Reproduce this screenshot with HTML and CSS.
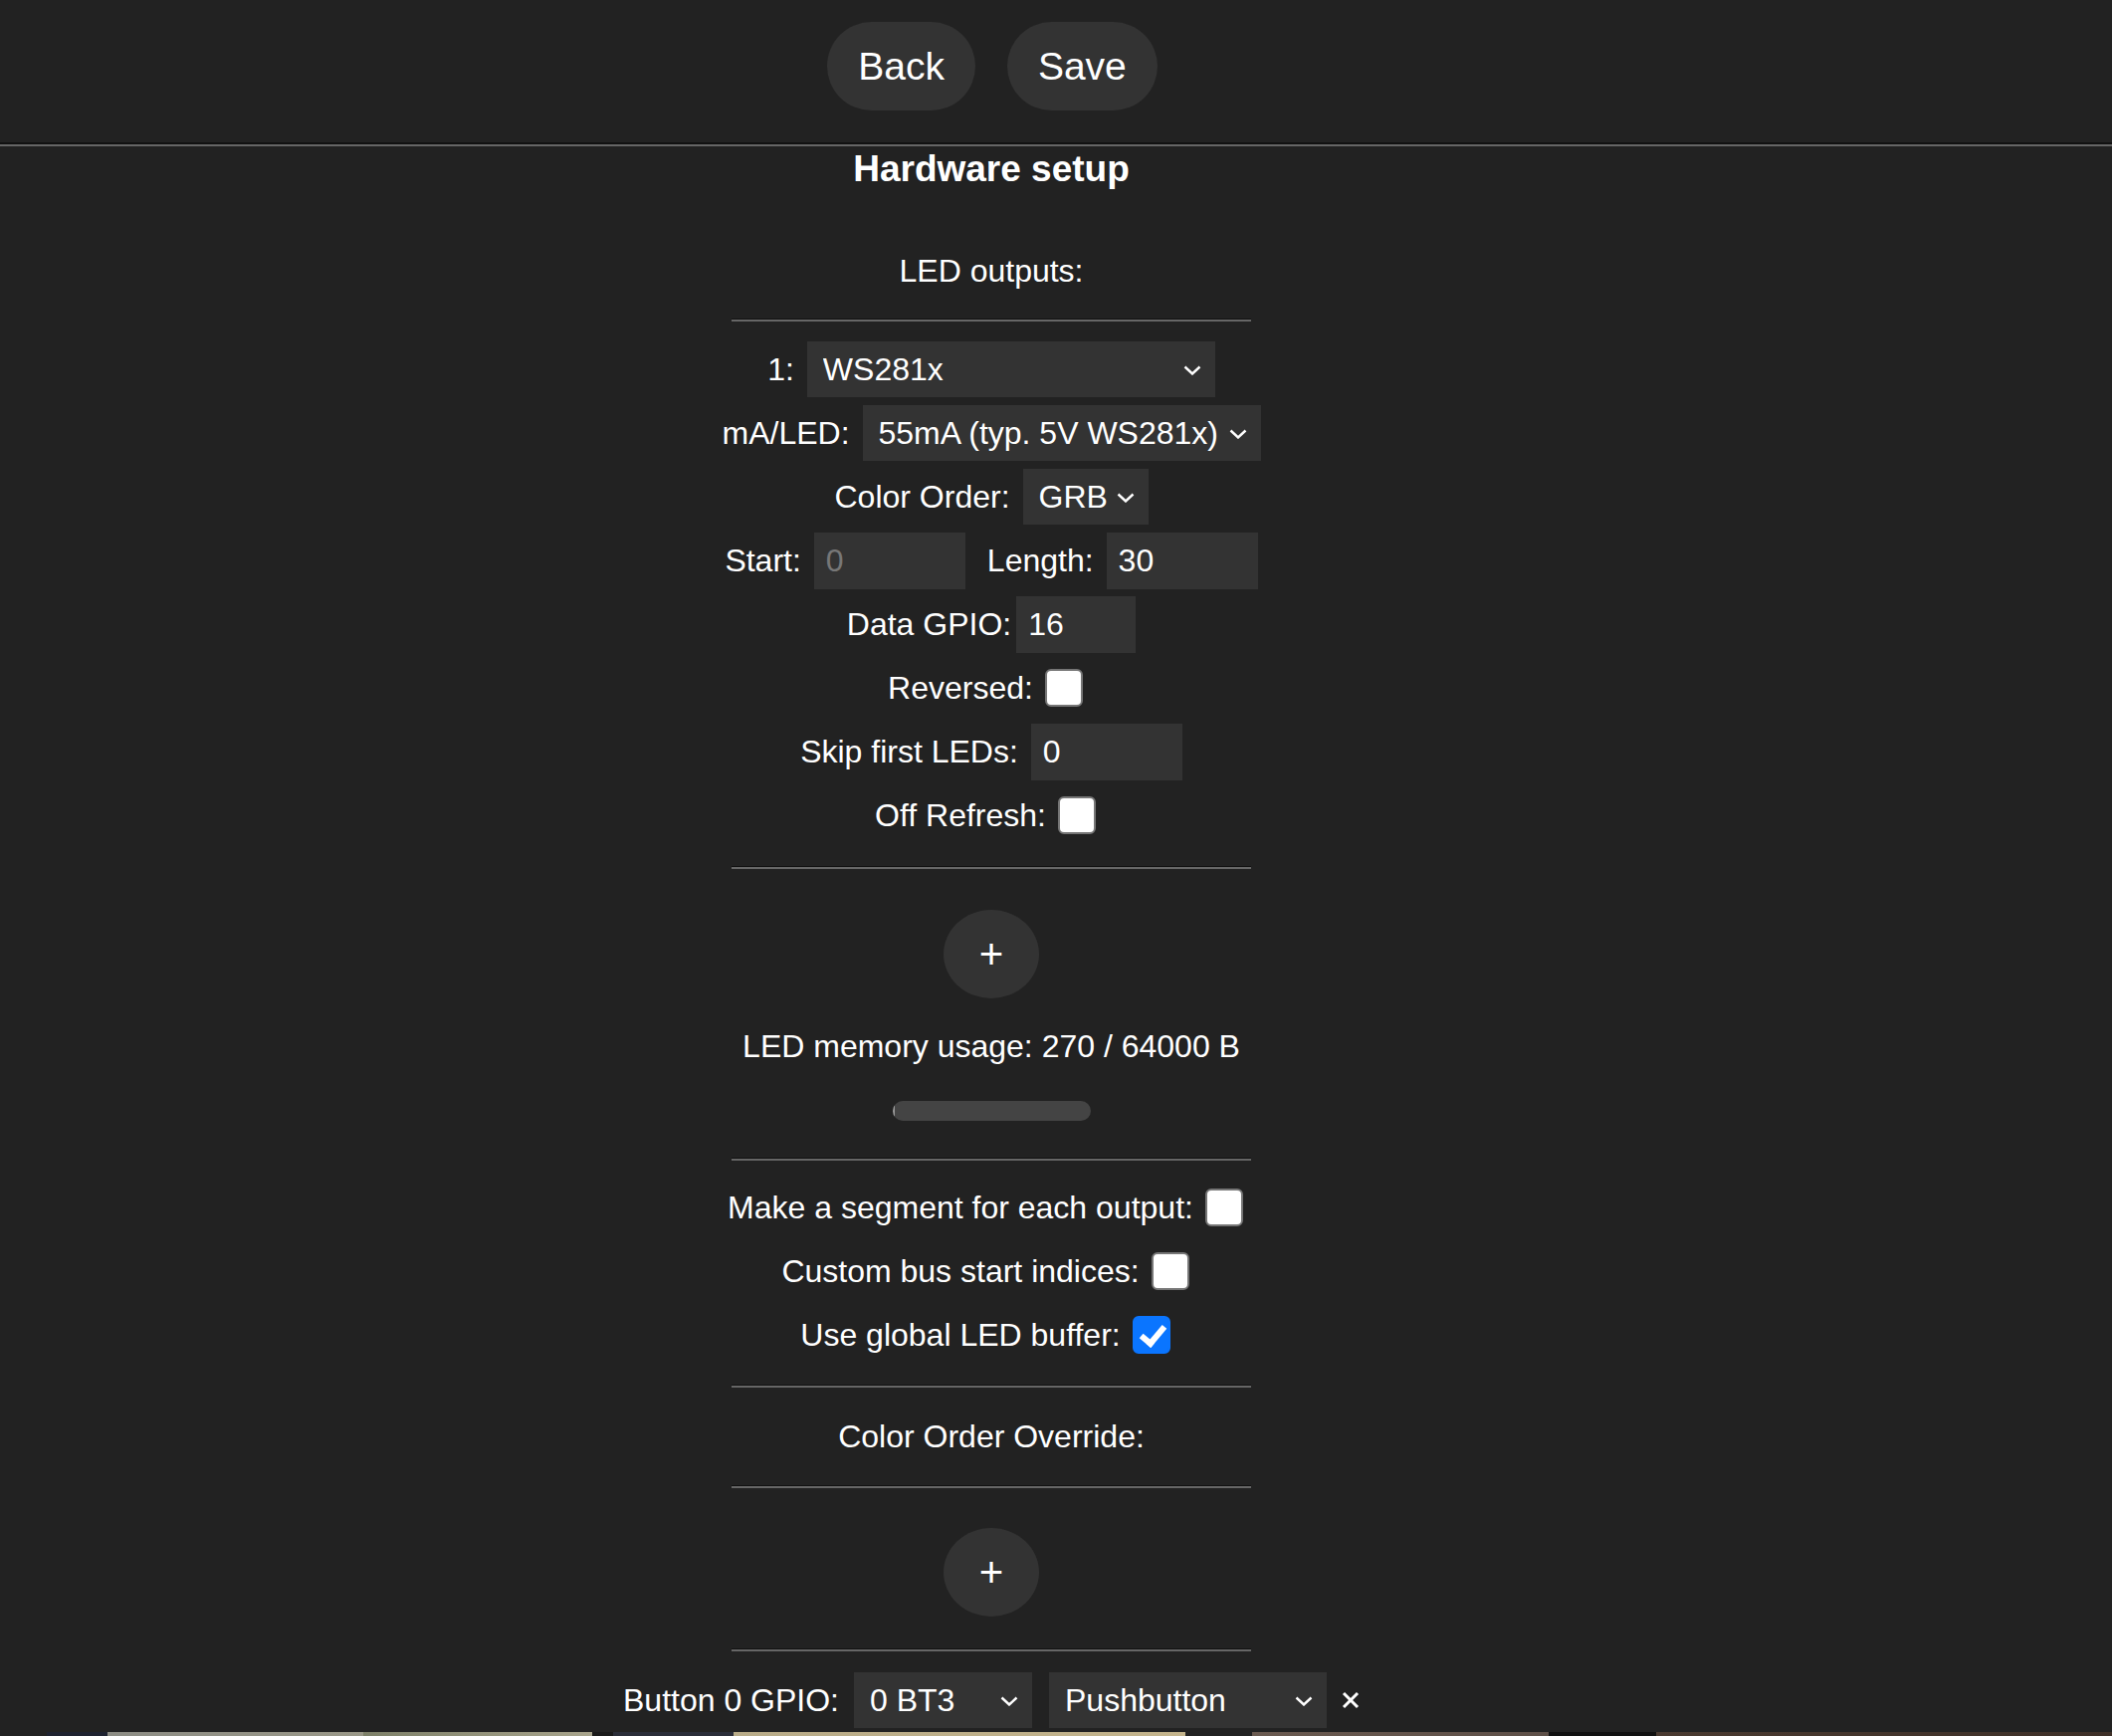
FILE: index.html
```html
<!DOCTYPE html>
<html lang="en">
<head>
  <meta charset="UTF-8">
  <title>LED Settings</title>
  <link rel="stylesheet" href="styles.css">
</head>
<body>
  <div class="toprow">
    <button type="button" class="btn">Back</button>
    <button type="button" class="btn">Save</button>
  </div>
  <hr class="sep">

  <div class="page">
    <h2>Hardware setup</h2>
    <div class="title">LED outputs:</div>
    <hr class="sml">

    <div class="row">
      <span>1:</span>
      <span class="sel w410"><select><option>WS281x</option></select><svg class="arr" viewBox="0 0 18 10"><polyline points="1.5,1.5 9,8.5 16.5,1.5"/></svg></span>
    </div>
    <div class="row">
      <span>mA/LED:</span>
      <span class="sel w400"><select><option>55mA (typ. 5V WS281x)</option></select><svg class="arr" viewBox="0 0 18 10"><polyline points="1.5,1.5 9,8.5 16.5,1.5"/></svg></span>
    </div>
    <div class="row">
      <span>Color Order:</span>
      <span class="sel w126"><select><option>GRB</option></select><svg class="arr" viewBox="0 0 18 10"><polyline points="1.5,1.5 9,8.5 16.5,1.5"/></svg></span>
    </div>
    <div class="row">
      <span>Start:</span>
      <input type="number" class="num" value="0" disabled>
      <span class="lbl2">Length:</span>
      <input type="number" class="num" value="30">
    </div>
    <div class="row tight">
      <span>Data GPIO:</span>
      <input type="number" class="num w120" value="16">
    </div>
    <div class="row cbrow">
      <span>Reversed:</span>
      <input type="checkbox" class="cb">
    </div>
    <div class="row">
      <span>Skip first LEDs:</span>
      <input type="number" class="num" value="0">
    </div>
    <div class="row cbrow">
      <span>Off Refresh:</span>
      <input type="checkbox" class="cb">
    </div>

    <hr class="sml after-rows">
    <button type="button" class="plus">+</button>
    <div class="memu">LED memory usage: 270 / 64000 B</div>
    <div class="bar"><div class="bar-fill"></div></div>
    <hr class="sml after-bar">

    <div class="row cbrow">
      <span>Make a segment for each output:</span>
      <input type="checkbox" class="cb">
    </div>
    <div class="row cbrow">
      <span>Custom bus start indices:</span>
      <input type="checkbox" class="cb">
    </div>
    <div class="row cbrow">
      <span>Use global LED buffer:</span>
      <input type="checkbox" class="cb" checked>
    </div>

    <hr class="sml after-cb">
    <div class="title co">Color Order Override:</div>
    <hr class="sml after-co">
    <button type="button" class="plus">+</button>
    <hr class="sml after-plus">

    <div class="row btnrow">
      <span>Button 0 GPIO:</span>
      <span class="sel w179"><select><option>0 BT3</option></select><svg class="arr" viewBox="0 0 18 10"><polyline points="1.5,1.5 9,8.5 16.5,1.5"/></svg></span>
      <span class="sel w279"><select><option>Pushbutton</option></select><svg class="arr" viewBox="0 0 18 10"><polyline points="1.5,1.5 9,8.5 16.5,1.5"/></svg></span>
      <svg class="rem" viewBox="0 0 18 18"><line x1="2" y1="2" x2="16" y2="16"/><line x1="16" y1="2" x2="2" y2="16"/></svg>
    </div>
  </div>

  <div class="strip"></div>
</body>
</html>
```

FILE: styles.css
```css
body {
  margin: 0;
  background-color: #222;
  color: #fff;
  font-family: "Liberation Sans", Arial, sans-serif;
  font-size: 32px;
  overflow: hidden;
}

.toprow {
  width: 1994px;
  display: flex;
  justify-content: center;
  gap: 32px;
  padding: 22px 0 32px;
}

.btn {
  height: 89px;
  padding: 0 31px;
  border: none;
  border-radius: 45px;
  background-color: #333;
  color: #fff;
  font-family: inherit;
  font-size: 39px;
}

hr.sep {
  margin: 0;
  height: 0;
  border: none;
  border-top: 2px solid #111;
  border-bottom: 2px solid #666;
}

.page {
  width: 1992px;
  text-align: center;
}

h2 {
  margin: 4px 0 0;
  font-size: 37px;
  line-height: 37px;
  font-weight: bold;
}

.title {
  margin-top: 68px;
  line-height: 32px;
}

hr.sml {
  width: 522px;
  height: 0;
  margin: 32px auto 20px;
  border: none;
  border-top: 1px solid #111;
  border-bottom: 2px solid #666;
}

hr.after-rows { margin-top: 23px; margin-bottom: 41px; }
hr.after-bar { margin-top: 37px; margin-bottom: 19px; }
hr.after-cb { margin-top: 22px; margin-bottom: 33px; }
hr.after-co { margin-top: 33px; margin-bottom: 40px; }
hr.after-plus { margin-top: 32px; margin-bottom: 21px; }

.row {
  display: flex;
  justify-content: center;
  align-items: center;
  gap: 13px;
  height: 56px;
  margin-bottom: 8px;
  white-space: nowrap;
}

.row.tight { gap: 5px; }
.row.cbrow { gap: 12px; }
.row.btnrow { gap: 15px; margin-bottom: 0; }
.row.btnrow .w279 { margin-left: 2px; }
.lbl2 { margin-left: 9px; }

.sel {
  position: relative;
  display: inline-block;
  height: 56px;
}

.sel select {
  appearance: none;
  -webkit-appearance: none;
  width: 100%;
  height: 56px;
  margin: 0;
  padding: 0 0 0 16px;
  border: none;
  border-radius: 0;
  background-color: #333;
  color: #fff;
  font-family: inherit;
  font-size: 32px;
  outline: none;
}

.sel .arr {
  position: absolute;
  right: 14px;
  top: 24px;
  width: 18px;
  height: 10px;
  fill: none;
  stroke: #fff;
  stroke-width: 2.4;
  pointer-events: none;
}

.w410 { width: 410px; }
.w400 { width: 400px; }
.w126 { width: 126px; }
.w179 { width: 179px; }
.w279 { width: 279px; }

.num {
  box-sizing: border-box;
  width: 152px;
  height: 57px;
  margin: 0;
  padding: 0 0 0 12px;
  border: none;
  background-color: #333;
  color: #fff;
  font-family: inherit;
  font-size: 32px;
  outline: none;
  -moz-appearance: textfield;
}

.num::-webkit-inner-spin-button,
.num::-webkit-outer-spin-button {
  -webkit-appearance: none;
  margin: 0;
}

.num:disabled { color: #777; }
.num.w120 { width: 120px; }

/* checkbox drawn by hand so it keeps the rounded grey frame */
.cb {
  appearance: none;
  -webkit-appearance: none;
  position: relative;
  box-sizing: border-box;
  width: 38px;
  height: 38px;
  margin: 0 12px 0 0;
  border: 2px solid #767676;
  border-radius: 6px;
  background-color: #fff;
}

.cb:checked {
  border-color: #0a75ff;
  background-color: #0a75ff;
}

.cb:checked::after {
  content: "";
  position: absolute;
  left: 11px;
  top: 3px;
  width: 9px;
  height: 19px;
  border-right: 6px solid #fff;
  border-bottom: 6px solid #fff;
  transform: rotate(40deg);
}

.plus {
  display: block;
  width: 96px;
  height: 89px;
  margin: 0 auto;
  padding: 0;
  border: none;
  border-radius: 50%;
  background-color: #333;
  color: #fff;
  font-family: inherit;
  font-size: 42px;
}

.memu {
  margin-top: 32px;
  line-height: 32px;
}

.bar {
  width: 199px;
  height: 20px;
  margin: 39px auto 0;
  border-radius: 10px;
  background-color: #444;
  overflow: hidden;
}

.bar-fill {
  width: 2px;
  height: 100%;
  background-color: #999;
}

.title.co { margin-top: 0; }

.rem {
  width: 18px;
  height: 18px;
  stroke: #fff;
  stroke-width: 3;
}

.strip {
  height: 4px;
  margin-top: 4px;
  background: linear-gradient(to right,
    #222 0, #222 47px,
    #1e2230 47px, #1e2230 108px,
    #8c8c84 108px, #9a9888 365px,
    #7d8068 365px, #a8a48c 595px,
    #1a1a1a 595px, #1a1a1a 616px,
    #2a2d38 616px, #2a2d38 737px,
    #b8ab88 737px, #c4b48c 1191px,
    #222 1191px, #222 1258px,
    #6a5a50 1258px, #5e5048 1556px,
    #111 1556px, #111 1664px,
    #4a3a30 1664px, #3e3028 2122px);
}
```
